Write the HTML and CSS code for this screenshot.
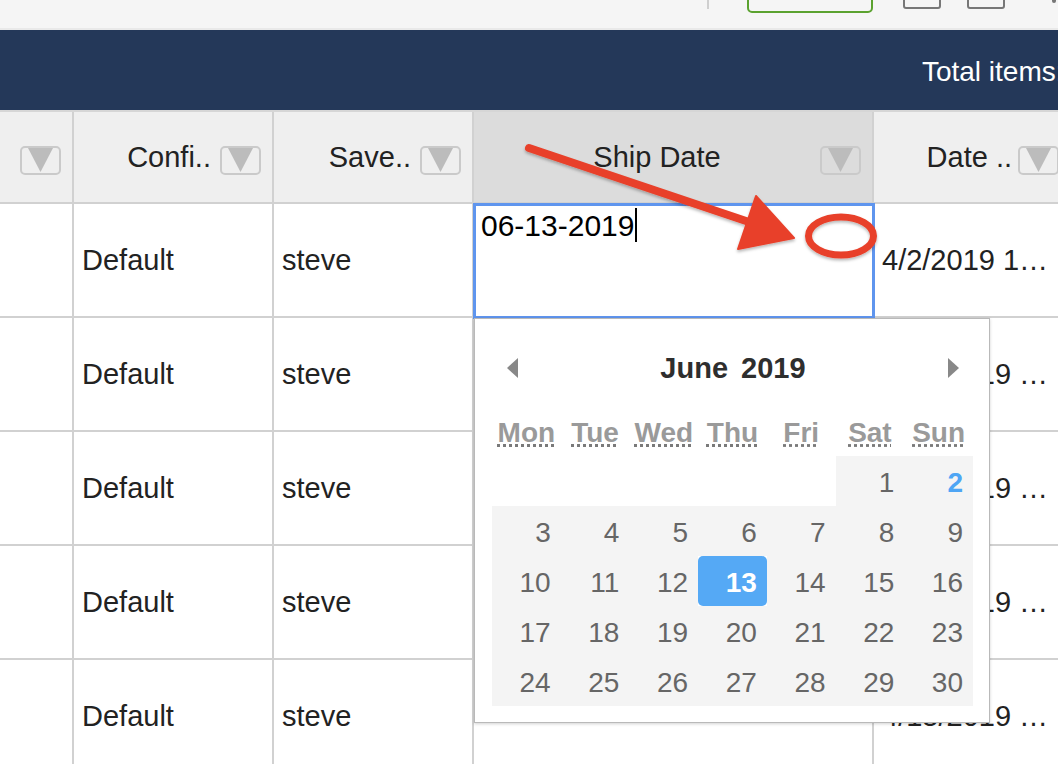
FILE: index.html
```html
<!DOCTYPE html>
<html lang="en">
<head>
<meta charset="utf-8">
<title>Orders grid - ship date editor</title>
<link rel="stylesheet" href="styles.css">
</head>
<body>
<div class="page">
  <div class="toolbar">
    <span class="tb-divider"></span>
    <span class="tb-apply">Ready</span>
    <span class="tb-box"></span>
    <span class="tb-box second"></span>
    <span class="tb-more"></span>
  </div>
  <div class="titlebar"><span class="total">Total items: 120</span></div>

  <div class="grid">
    <div class="row head">
      <div class="cell"><span class="hd-text"></span><span class="flt"><svg width="25" height="24" viewBox="0 0 25 24"><polygon points="0,0 25,0 12.5,24"/></svg></span></div>
      <div class="cell"><span class="hd-text">Confi..</span><span class="flt"><svg width="25" height="24" viewBox="0 0 25 24"><polygon points="0,0 25,0 12.5,24"/></svg></span></div>
      <div class="cell"><span class="hd-text">Save..</span><span class="flt"><svg width="25" height="24" viewBox="0 0 25 24"><polygon points="0,0 25,0 12.5,24"/></svg></span></div>
      <div class="cell ship"><span class="hd-text center">Ship Date</span><span class="flt"><svg width="25" height="24" viewBox="0 0 25 24"><polygon points="0,0 25,0 12.5,24"/></svg></span></div>
      <div class="cell"><span class="hd-text tight">Date ..</span><span class="flt"><svg width="25" height="24" viewBox="0 0 25 24"><polygon points="0,0 25,0 12.5,24"/></svg></span></div>
      <div class="cell"><span class="hd-text">Status</span><span class="flt"><svg width="25" height="24" viewBox="0 0 25 24"><polygon points="0,0 25,0 12.5,24"/></svg></span></div>
    </div>

    <div class="row body">
      <div class="cell"></div>
      <div class="cell">Default</div>
      <div class="cell">steve</div>
      <div class="cell editing">
        <span class="edit-val">06-13-2019</span><span class="caret"></span>
        <div class="cal">
          <div class="cal-head">
            <span class="cal-nav"><svg width="11" height="20" viewBox="0 0 11 20"><polygon points="11,0 11,20 0,10"/></svg></span>
            <span class="cal-title">June 2019</span>
            <span class="cal-nav"><svg width="11" height="20" viewBox="0 0 11 20"><polygon points="0,0 0,20 11,10"/></svg></span>
          </div>
          <div class="cal-dow">
            <abbr title="Monday">Mon</abbr><abbr title="Tuesday">Tue</abbr><abbr title="Wednesday">Wed</abbr><abbr title="Thursday">Thu</abbr><abbr title="Friday">Fri</abbr><abbr title="Saturday">Sat</abbr><abbr title="Sunday">Sun</abbr>
          </div>
          <div class="cal-days">
            <span class="day empty"></span><span class="day empty"></span><span class="day empty"></span><span class="day empty"></span><span class="day empty"></span><span class="day">1</span><span class="day today">2</span>
            <span class="day">3</span><span class="day">4</span><span class="day">5</span><span class="day">6</span><span class="day">7</span><span class="day">8</span><span class="day">9</span>
            <span class="day">10</span><span class="day">11</span><span class="day">12</span><span class="day selected">13</span><span class="day">14</span><span class="day">15</span><span class="day">16</span>
            <span class="day">17</span><span class="day">18</span><span class="day">19</span><span class="day">20</span><span class="day">21</span><span class="day">22</span><span class="day">23</span>
            <span class="day">24</span><span class="day">25</span><span class="day">26</span><span class="day">27</span><span class="day">28</span><span class="day">29</span><span class="day">30</span>
          </div>
        </div>
      </div>
      <div class="cell date">4/2/2019 10:14 AM</div>
      <div class="cell">Open</div>
    </div>

    <div class="row body">
      <div class="cell"></div>
      <div class="cell">Default</div>
      <div class="cell">steve</div>
      <div class="cell"></div>
      <div class="cell date">4/15/2019 9:02 AM</div>
      <div class="cell">Open</div>
    </div>

    <div class="row body">
      <div class="cell"></div>
      <div class="cell">Default</div>
      <div class="cell">steve</div>
      <div class="cell"></div>
      <div class="cell date">4/15/2019 9:40 AM</div>
      <div class="cell">Open</div>
    </div>

    <div class="row body">
      <div class="cell"></div>
      <div class="cell">Default</div>
      <div class="cell">steve</div>
      <div class="cell"></div>
      <div class="cell date">4/15/2019 1:18 PM</div>
      <div class="cell">Open</div>
    </div>

    <div class="row body">
      <div class="cell"></div>
      <div class="cell">Default</div>
      <div class="cell">steve</div>
      <div class="cell"></div>
      <div class="cell date">4/15/2019 3:55 PM</div>
      <div class="cell">Open</div>
    </div>
  </div>
</div>

<svg class="annot" width="1058" height="764" viewBox="0 0 1058 764" aria-hidden="true">
  <defs>
    <filter id="sh" x="-10%" y="-20%" width="120%" height="150%">
      <feDropShadow dx="0" dy="2" stdDeviation="1.5" flood-color="#000" flood-opacity="0.28"/>
    </filter>
  </defs>
  <g filter="url(#sh)">
    <line x1="529" y1="148" x2="752" y2="223" stroke="#e8402a" stroke-width="8" stroke-linecap="round"/>
    <polygon points="756,196 794,238 738,249" fill="#e8402a" stroke="#e8402a" stroke-width="2" stroke-linejoin="round"/>
    <ellipse cx="841" cy="236" rx="32.5" ry="19" fill="none" stroke="#e8402a" stroke-width="7"/>
  </g>
</svg>
</body>
</html>
```

FILE: styles.css
```css
* { box-sizing: border-box; }

html, body {
  margin: 0;
  padding: 0;
}

body {
  width: 1058px;
  height: 764px;
  overflow: hidden;
  position: relative;
  background: #fff;
  color: #222;
  font-family: "Liberation Sans", Arial, Helvetica, sans-serif;
}

.page {
  width: 1142px;
}

/* top toolbar (scrolled, only the bottom edge visible) */
.toolbar {
  height: 30px;
  background: #f5f5f5;
  border-bottom: 2px solid #e9e9e9;
  display: flex;
  align-items: flex-start;
  overflow: hidden;
  padding-right: 70px;
}

.tb-divider {
  margin-left: auto;
  width: 2px;
  height: 9px;
  background: #cfcfcf;
}

.tb-apply {
  margin-left: 38px;
  width: 126px;
  height: 44px;
  margin-top: -31px;
  border: 2px solid #5ba22f;
  border-radius: 5px;
  color: #5ba22f;
  font-size: 28px;
  line-height: 28px;
  text-align: center;
  overflow: hidden;
}

.tb-box {
  margin-left: 30px;
  width: 38px;
  height: 30px;
  margin-top: -21px;
  border: 2px solid #777;
  border-radius: 3px;
}

.tb-box.second { margin-left: 26px; }

.tb-more {
  margin-left: 47px;
  width: 4px;
  height: 3px;
  background: #777;
  border-radius: 0 0 2px 2px;
  margin-right: 16px;
}

/* navy title bar */
.titlebar {
  height: 80px;
  background: #243859;
  color: #fff;
  display: flex;
  justify-content: flex-end;
  align-items: center;
  padding: 3px 24px 0 0;
  font-size: 28px;
  white-space: nowrap;
}

/* grid */
.row {
  display: grid;
  grid-template-columns: 74px 200px 200px 400px 198px 200px;
}

.cell {
  border-right: 2px solid #d1d1d1;
  border-bottom: 2px solid #d1d1d1;
}

.head {
  border-top: 2px solid #d6d6d6;
  background: #efefef;
}

.head .cell {
  height: 92px;
  display: flex;
  align-items: center;
  padding-right: 11px;
}

.head .cell.ship { background: #dcdcdc; }

.hd-text {
  flex: 1;
  min-width: 0;
  font-size: 29px;
  color: #222;
  white-space: nowrap;
  overflow: hidden;
  text-align: right;
  padding-right: 9px;
}

.hd-text.center {
  text-align: center;
  padding-left: 20px;
  padding-right: 0;
}

.hd-text.tight { padding-right: 6px; }

.flt {
  flex: none;
  width: 41px;
  height: 29px;
  margin-top: 6px;
  border: 2px solid #cacaca;
  border-radius: 5px;
  display: flex;
  justify-content: center;
  align-items: flex-start;
}

.flt svg { display: block; fill: #bcbcbc; }

.body .cell {
  height: 114px;
  line-height: 112px;
  padding: 0 8px;
  font-size: 29px;
  color: #222;
  background: #fff;
  white-space: nowrap;
  overflow: hidden;
  text-overflow: ellipsis;
}

.body .cell.date { padding-right: 17px; }

/* in-place editor */
.body .cell.editing {
  position: relative;
  overflow: visible;
  line-height: normal;
  padding: 4px 0 0 7px;
  outline: 3px solid #5f95ee;
  outline-offset: -2px;
}

.edit-val {
  font-size: 30px;
  color: #000;
}

.caret {
  display: inline-block;
  width: 2px;
  height: 34px;
  background: #000;
  vertical-align: -6px;
  margin-left: 1px;
}

/* date picker dropdown */
.cal {
  position: absolute;
  top: calc(100% + 2px);
  left: 0;
  z-index: 10;
  width: 516px;
  height: 405px;
  padding: 17px 16px 16px 17px;
  background: #fff;
  border: 1px solid #b9b9b9;
  box-shadow: 0 1px 3px rgba(0, 0, 0, 0.18);
  line-height: normal;
  white-space: normal;
}

.cal-head {
  height: 64px;
  display: flex;
  align-items: center;
  justify-content: space-between;
  padding: 0 14px 0 15px;
}

.cal-nav svg { display: block; fill: #888; }

.cal-title {
  font-size: 29px;
  font-weight: bold;
  color: #2e2e2e;
  word-spacing: 5px;
  line-height: 64px;
}

.cal-dow {
  height: 56px;
  display: grid;
  grid-template-columns: repeat(7, 1fr);
  padding-top: 10px;
  line-height: 46px;
  font-size: 28px;
  font-weight: bold;
  color: #9a9a9a;
  text-align: center;
}

.cal-dow abbr {
  text-decoration: underline dotted #7a7a7a;
  text-underline-offset: 2px;
}

.cal-days {
  display: grid;
  grid-template-columns: repeat(7, 1fr);
  grid-auto-rows: 50px;
}

.day {
  background: #f4f4f4;
  text-align: right;
  padding-right: 10px;
  font-size: 28px;
  line-height: 54px;
  color: #666;
}

.day.empty { background: transparent; }

.day.today {
  color: #4ea5f4;
  font-weight: bold;
}

.day.selected {
  background: #55a9f5;
  color: #fff;
  font-weight: bold;
  border-radius: 5px;
}

/* red annotation drawn over the screenshot */
.annot {
  position: absolute;
  top: 0;
  left: 0;
  z-index: 20;
  pointer-events: none;
}
```
